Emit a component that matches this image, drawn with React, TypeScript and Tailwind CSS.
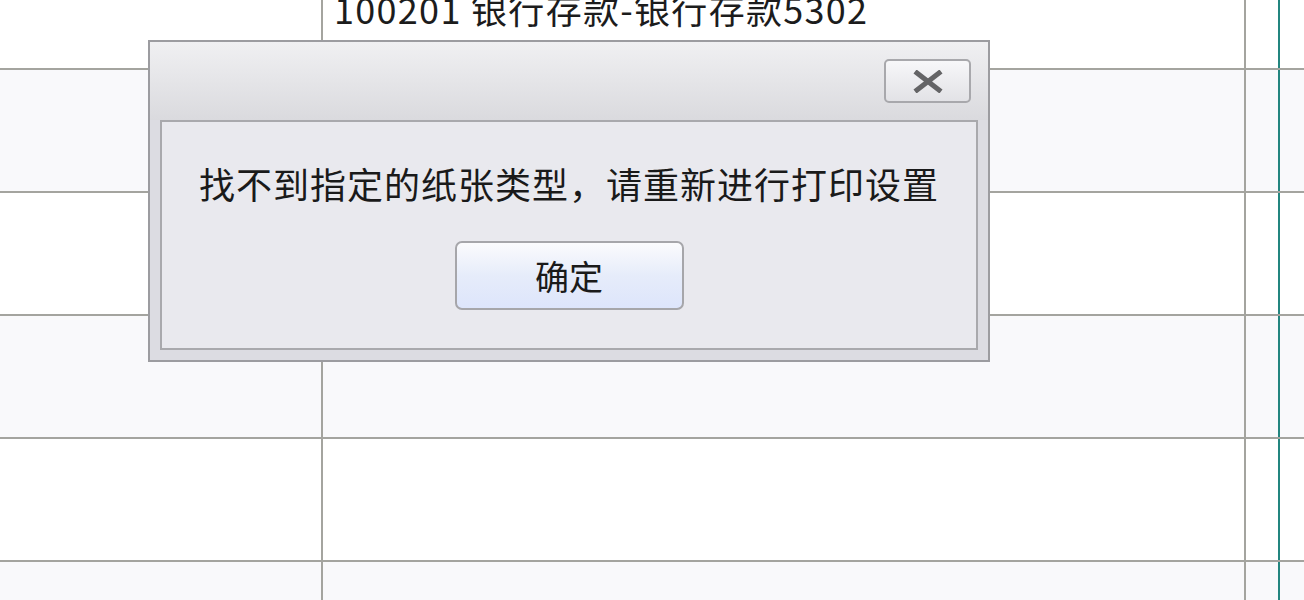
import React from "react";

const FONT = { fontFamily: '"Noto Sans CJK SC", "Noto Sans", sans-serif' };

function Row({ h, bg, children }: { h: string; bg: string; children?: React.ReactNode }) {
  return (
    <div className={`flex ${h} ${bg} border-b-2 border-[#a4a49f] shrink-0`}>
      <div className="w-[323px] shrink-0 border-r-2 border-[#a4a49f]" />
      <div className="w-[923px] shrink-0 border-r-2 border-[#a4a49f]">{children}</div>
      <div className="w-[34px] shrink-0 border-r-2 border-[#23857f]" />
      <div className="flex-1" />
    </div>
  );
}

export default function App() {
  return (
    <div className="relative w-[1304px] h-[600px] overflow-hidden bg-white" style={FONT}>
      <div className="flex flex-col">
        <Row h="h-[70px]" bg="bg-white">
          <div className="mt-[-10px] ml-[11px] text-[36px] leading-none text-[#1c1c1c] whitespace-nowrap tracking-[1.3px]">
            100201 银行存款-银行存款5302
          </div>
        </Row>
        <Row h="h-[123px]" bg="bg-[#f9f9fb]" />
        <Row h="h-[123px]" bg="bg-white" />
        <Row h="h-[123px]" bg="bg-[#f9f9fb]" />
        <Row h="h-[123px]" bg="bg-white" />
        <Row h="h-[123px]" bg="bg-[#f9f9fb]" />
      </div>

      {/* Dialog */}
      <div className="absolute left-[148px] top-[40px] w-[842px] h-[322px] border-2 border-[#9c9ca0] bg-[#dcdce2] flex flex-col">
        <div className="h-[78px] shrink-0 bg-gradient-to-b from-[#f0f0f2] to-[#dadade] flex justify-end items-start pt-[17px] pr-[17px]">
          <div className="w-[87px] h-[44px] rounded-[5px] border-2 border-[#a8a8ac] bg-gradient-to-b from-[#f7f7f9] to-[#e2e2e6] flex items-center justify-center">
            <svg width="30" height="23" viewBox="0 0 30 23">
              <path d="M4 3 L26 20 M26 3 L4 20" stroke="#646466" strokeWidth="5" strokeLinecap="square" />
            </svg>
          </div>
        </div>
        <div className="flex-1 mx-[10px] mb-[10px] border-2 border-[#a9a9ad] bg-[#e9e9ee] flex flex-col items-center">
          <div className="mt-[43px] text-[36px] leading-none text-[#1a1a1a] whitespace-nowrap tracking-[1px]">
            找不到指定的纸张类型，请重新进行打印设置
          </div>
          <div className="mt-[40px] w-[229px] h-[69px] rounded-[7px] border-2 border-[#a6a6aa] bg-gradient-to-b from-[#fbfbfd] via-[#e6ecfa] to-[#dde5fb] flex items-center justify-center text-[34px] leading-none text-[#1a1a1a]">
            确定
          </div>
        </div>
      </div>
    </div>
  );
}
